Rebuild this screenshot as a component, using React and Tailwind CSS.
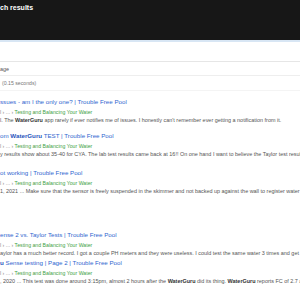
import React from 'react';

const results = [
  {
    title: <>ssues - am I the only one? | Trouble Free Pool</>,
    snippet: <>l. The <b>WaterGuru</b> app rarely if ever notifies me of issues. I honestly can't remember ever getting a notification from it.</>,
    gap: 'mt-[6px]',
  },
  {
    title: <>om <b>WaterGuru</b> TEST | Trouble Free Pool</>,
    snippet: <>y results show about 35-40 for CYA. The lab test results came back at 16!! On one hand I want to believe the Taylor test results but o</>,
    gap: 'mt-[7px]',
  },
  {
    title: <>ot working | Trouble Free Pool</>,
    snippet: <>1, 2021 ... Make sure that the sensor is freely suspended in the skimmer and not backed up against the wall to register water flow. The</>,
    gap: 'mt-[10px]',
  },
  {
    title: <>ense 2 vs. Taylor Tests | Trouble Free Pool</>,
    snippet: <>aylor has a much better record. I got a couple PH meters and they were useless. I could test the same water 3 times and get 3 differe</>,
    gap: 'mt-[35px]',
  },
  {
    title: <><b>u</b> Sense testing | Page 2 | Trouble Free Pool</>,
    snippet: <>, 2020 ... This test was done around 3:15pm, almost 2 hours after the <b>WaterGuru</b> did its thing. <b>WaterGuru</b> reports FC of 2.7 and pH</>,
    gap: 'mt-[1px]',
  },
];

export default function App() {
  return (
    <div className="w-[300px] h-[300px] overflow-hidden bg-white font-['Liberation_Sans',Arial,sans-serif]">
      {/* header */}
      <div className="h-[42px] bg-[#171717] border-b-2 border-[#d8e6f4] pt-[3px]">
        <div className="text-white font-bold text-[7px] leading-[10px]">ch results</div>
      </div>
      <div className="h-[20px] border-b border-[#e6e6e6]" />
      <div className="h-[14px] border-b border-[#eeeeee] text-[5.4px] leading-[14px] text-[#555]">age</div>
      <div className="h-[15px] border-b border-[#f4f4f4] pt-[3px] pl-[2px] text-[5.2px] leading-[8px] text-[#777]">
        (0.15 seconds)
      </div>

      <div className="flex flex-col">
        {results.map((r, i) => (
          <div key={i} className={r.gap}>
            <div className="text-[6.2px] leading-[10px] text-[#2f66cf] whitespace-nowrap [&_b]:font-bold [&_b]:text-[#1f55bd]">
              {r.title}
            </div>
            <div className="mt-[1px] text-[5.2px] leading-[8px] text-[#3f9f45] whitespace-nowrap">
              <span className="text-[#8a8a8a]">l › ... › </span>Testing and Balancing Your Water
            </div>
            <div className="text-[5.45px] leading-[8px] text-[#555] whitespace-nowrap [&_b]:font-bold [&_b]:text-[#333]">
              {r.snippet}
            </div>
          </div>
        ))}
      </div>
    </div>
  );
}
